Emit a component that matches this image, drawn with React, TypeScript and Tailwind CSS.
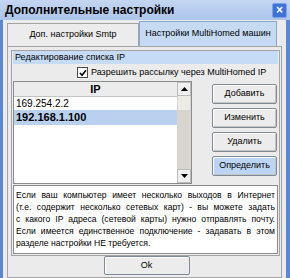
import React from 'react';

const font = { fontFamily: '"Liberation Sans", Arial, sans-serif' };

const NOTE = [
  'Если ваш компьютер имеет несколько выходов в Интернет',
  '(т.е. содержит несколько сетевых карт) - вы можете задать',
  'с какого IP адреса (сетевой карты) нужно отправлять почту.',
  'Если имеется единственное подключение - задавать в этом',
];

function Btn({ label, active }: { label: string; active?: boolean }) {
  return (
    <div
      className={`flex h-[20px] w-[65px] items-center justify-center rounded-[2px] border border-[#7f8a99] text-[9px] text-black shadow-[inset_1px_1px_0_#ffffff,inset_-1px_-1px_0_#c4c4c4] ${
        active ? 'bg-[#bdd5f5]' : 'bg-[#ececec]'
      }`}
    >
      {label}
    </div>
  );
}

function Arrow({ up }: { up?: boolean }) {
  return (
    <div className="flex h-[14px] w-[14px] items-center justify-center border border-[#bcbcbc] bg-[#f0f0f0]">
      <svg width="7" height="4" viewBox="0 0 7 4">
        <path d={up ? 'M0 4 L3.5 0 L7 4 Z' : 'M0 0 L3.5 4 L7 0 Z'} fill="#000" />
      </svg>
    </div>
  );
}

export default function App() {
  return (
    <div className="flex h-[278px] w-[290px] flex-col overflow-hidden bg-[#5b88d6] pb-[3px] pl-[3px] pr-[4px]" style={font}>
      {/* Title bar */}
      <div className="-ml-[3px] -mr-[4px] flex h-[20px] shrink-0 items-center justify-between bg-gradient-to-b from-[#c4d6f2] to-[#adc5ea] pl-[5px] pr-[3px]">
        <span className="text-[12px] font-bold text-black">Дополнительные настройки</span>
        <div className="flex h-[15px] w-[15px] items-center justify-center rounded-[2px] border border-[#7fa2e6] bg-[#3d72da] text-[12px] font-bold leading-none text-white">
          ×
        </div>
      </div>

      {/* Body */}
      <div className="flex flex-1 flex-col bg-[#ebebeb] px-[4px] pt-[1px]">
        {/* Tabs */}
        <div className="flex h-[25px] shrink-0 items-end">
          <div className="flex h-[23px] w-[132px] items-center justify-center border border-b-0 border-[#a3a3a3] bg-[#ececec] text-[9px] whitespace-nowrap">
            Доп. настройки Smtp
          </div>
          <div className="flex h-[25px] w-[138px] items-center justify-center border border-b-0 border-[#8ba6cc] bg-[#c6daf4] text-[9px] whitespace-nowrap">
            Настройки MultiHomed машин
          </div>
        </div>

        {/* Panel */}
        <div className="flex flex-1 flex-col border border-[#a3a3a3] bg-[#ebebeb] pb-[2px] pl-[3px] pr-[1px] pt-[3px]">
          <div className="border border-[#a3a3a3] px-[1px] pb-[1px]">
            <div className="flex h-[13px] items-center bg-[#c6dbf5] pl-[2px] text-[9px]">
              Редактирование списка IP
            </div>
            <div className="flex h-[17px] items-center pl-[64px] text-[9px] whitespace-nowrap">
              <div className="mr-[3px] flex h-[11px] w-[11px] items-center justify-center border border-[#4b4b4b] bg-white">
                <svg width="8" height="8" viewBox="0 0 8 8">
                  <path d="M1 4 L3 6.2 L7 1.2" stroke="#000" strokeWidth="1.6" fill="none" />
                </svg>
              </div>
              Разрешить рассылку через MultiHomed IP
            </div>
            <div className="flex">
              {/* List */}
              <div className="flex h-[103px] w-[179px] border border-[#8c8c8c] bg-white">
                <div className="flex flex-1 flex-col">
                  <div className="flex h-[15px] items-center justify-center border-b border-[#c4c4c4] bg-[#ececec] text-[11px] font-bold">
                    IP
                  </div>
                  <div className="flex h-[13px] items-center pl-[2px] text-[10px]">169.254.2.2</div>
                  <div className="flex h-[15px] items-center bg-[#b9d1ef] pl-[2px] text-[11px] font-bold">
                    192.168.1.100
                  </div>
                </div>
                <div className="flex w-[14px] flex-col bg-[#d8d5cf]">
                  <Arrow up />
                  <div className="mx-[1px] h-[14px] bg-[#ecebe6]" />
                  <div className="flex-1" />
                  <Arrow />
                </div>
              </div>
              {/* Buttons */}
              <div className="ml-auto mr-[1px] flex flex-col gap-[4px] pt-[3px]">
                <Btn label="Добавить" />
                <Btn label="Изменить" />
                <Btn label="Удалить" />
                <Btn label="Определить" active />
              </div>
            </div>
            <div className="mt-[1px] border border-[#8c8c8c] bg-white px-[2px] pb-[4px] pt-[3px] text-[8.6px] leading-[12px]">
              {NOTE.map((line) => (
                <div key={line} className="whitespace-nowrap text-justify [text-align-last:justify]">
                  {line}
                </div>
              ))}
              <div>разделе настройки НЕ требуется.</div>
            </div>
          </div>
          <div className="mt-auto flex justify-center pl-[2px]">
            <div className="flex h-[19px] w-[86px] items-center justify-center rounded-[2px] border border-[#7f8a99] bg-[#ececec] text-[9px] shadow-[inset_1px_1px_0_#ffffff]">
              Ok
            </div>
          </div>
        </div>
      </div>
    </div>
  );
}
